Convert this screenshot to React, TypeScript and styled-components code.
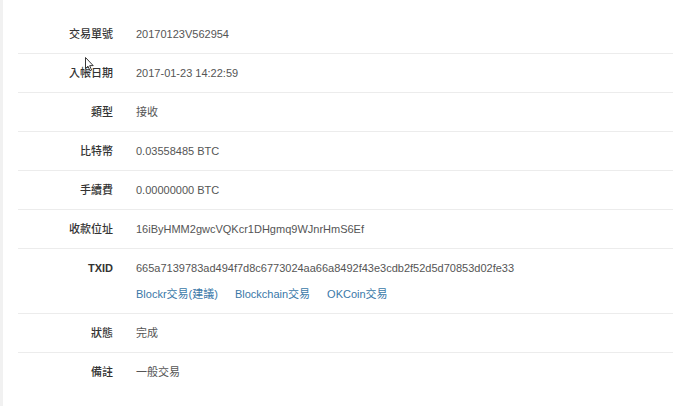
import styled, { createGlobalStyle } from "styled-components";

const GlobalStyle = createGlobalStyle`
  html, body {
    margin: 0;
    padding: 0;
    background: #ffffff;
  }
  body {
    font-family: "Liberation Sans", "Noto Sans CJK TC", sans-serif;
  }
`;

type Row = { label: string; value: string; latin?: boolean; links?: string[] };

const rows: Row[] = [
  { label: "交易單號", value: "20170123V562954" },
  { label: "入帳日期", value: "2017-01-23 14:22:59" },
  { label: "類型", value: "接收" },
  { label: "比特幣", value: "0.03558485 BTC" },
  { label: "手續費", value: "0.00000000 BTC" },
  { label: "收款位址", value: "16iByHMM2gwcVQKcr1DHgmq9WJnrHmS6Ef" },
  {
    label: "TXID",
    latin: true,
    value: "665a7139783ad494f7d8c6773024aa66a8492f43e3cdb2f52d5d70853d02fe33",
    links: ["Blockr交易(建議)", "Blockchain交易", "OKCoin交易"],
  },
  { label: "狀態", value: "完成" },
  { label: "備註", value: "一般交易" },
];

const Page = styled.div`
  position: relative;
  height: 406px;
  box-sizing: border-box;
  border-left: 3px solid #f1f1f1;
  padding: 15px 0 0 15px;
`;

const Table = styled.div`
  width: 655px;
  display: flex;
  flex-direction: column;
`;

const RowBox = styled.div`
  display: grid;
  grid-template-columns: 95px 1fr;
  column-gap: 23px;
  padding: 9px 0;
  font-size: 11px;
  line-height: 20px;

  & + & {
    border-top: 1px solid #ececec;
  }
`;

const Label = styled.div<{ $latin?: boolean }>`
  text-align: right;
  font-weight: ${(p) => (p.$latin ? 700 : 500)};
  color: #333333;
`;

const Value = styled.div`
  color: #555555;
`;

const Links = styled.div`
  display: flex;
  gap: 17px;
  margin-top: 6px;
`;

const LinkText = styled.a`
  color: #3a78a8;
  text-decoration: none;
`;

const Cursor = styled.svg`
  position: absolute;
  left: 82px;
  top: 57px;
`;

export default function App() {
  return (
    <>
      <GlobalStyle />
      <Page>
        <Table>
          {rows.map((r) => (
            <RowBox key={r.label}>
              <Label $latin={r.latin}>{r.label}</Label>
              <Value>
                {r.value}
                {r.links && (
                  <Links>
                    {r.links.map((l) => (
                      <LinkText key={l} href="#">
                        {l}
                      </LinkText>
                    ))}
                  </Links>
                )}
              </Value>
            </RowBox>
          ))}
        </Table>
        <Cursor width="10" height="15" viewBox="0 0 10 15">
          <path
            d="M0.5 0.5 L0.5 11.5 L3 9.2 L5 13.8 L6.6 13.1 L4.7 8.6 L8.2 8.6 Z"
            fill="#ffffff"
            stroke="#222222"
            strokeWidth="0.9"
            strokeLinejoin="round"
          />
        </Cursor>
      </Page>
    </>
  );
}
